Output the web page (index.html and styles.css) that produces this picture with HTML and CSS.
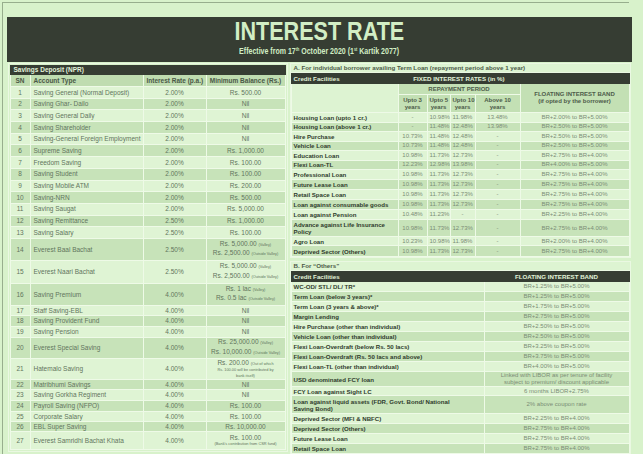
FILE: index.html
```html
<!DOCTYPE html>
<html>
<head>
<meta charset="utf-8">
<link rel="stylesheet" href="styles.css">
</head>
<body>
<div class="frame">
  <div class="sheet">
    <header class="banner">
      <div class="title"><span>INTEREST RATE</span></div>
      <div class="subtitle"><span>Effective from 17<sup>th</sup> October 2020 (1<sup>st</sup> Kartik 2077)</span></div>
    </header>
    <div class="content">
      <section class="left">
        <table class="tbl sav">
          <colgroup><col class="c-sn"><col class="c-acc"><col class="c-int"><col class="c-min"></colgroup>
          <tr class="dark-head"><td colspan="4">Savings Deposit (NPR)</td></tr>
          <tr class="col-head"><td class="ctr">SN</td><td>Account Type</td><td class="ctr">Interest Rate (p.a.)</td><td class="ctr">Minimum Balance (Rs.)</td></tr>
          <tr class="lt h12"><td class="ctr">1</td><td>Saving General (Normal Deposit)</td><td class="ctr">2.00%</td><td class="ctr">Rs. 500.00</td></tr>
          <tr class="dk h12"><td class="ctr">2</td><td>Saving Ghar- Dailo</td><td class="ctr">2.00%</td><td class="ctr">Nil</td></tr>
          <tr class="lt h12"><td class="ctr">3</td><td>Saving General Daily</td><td class="ctr">2.00%</td><td class="ctr">Nil</td></tr>
          <tr class="dk h12"><td class="ctr">4</td><td>Saving Shareholder</td><td class="ctr">2.00%</td><td class="ctr">Nil</td></tr>
          <tr class="lt h12"><td class="ctr">5</td><td>Saving-General Foreign Employment</td><td class="ctr">2.00%</td><td class="ctr">Nil</td></tr>
          <tr class="dk h12"><td class="ctr">6</td><td>Supreme Saving</td><td class="ctr">2.00%</td><td class="ctr">Rs. 1,000.00</td></tr>
          <tr class="lt h12"><td class="ctr">7</td><td>Freedom Saving</td><td class="ctr">2.00%</td><td class="ctr">Rs. 100.00</td></tr>
          <tr class="dk h12"><td class="ctr">8</td><td>Saving Student</td><td class="ctr">2.00%</td><td class="ctr">Rs. 100.00</td></tr>
          <tr class="lt h12"><td class="ctr">9</td><td>Saving Mobile ATM</td><td class="ctr">2.00%</td><td class="ctr">Rs. 200.00</td></tr>
          <tr class="dk h12"><td class="ctr">10</td><td>Saving-NRN</td><td class="ctr">2.00%</td><td class="ctr">Rs. 500.00</td></tr>
          <tr class="lt h12"><td class="ctr">11</td><td>Saving Saugat</td><td class="ctr">2.00%</td><td class="ctr">Rs. 5,000.00</td></tr>
          <tr class="dk h12"><td class="ctr">12</td><td>Saving Remittance</td><td class="ctr">2.50%</td><td class="ctr">Rs. 1,000.00</td></tr>
          <tr class="lt h12"><td class="ctr">13</td><td>Saving Salary</td><td class="ctr">2.50%</td><td class="ctr">Rs. 100.00</td></tr>
          <tr class="dk h22"><td class="ctr">14</td><td>Everest Baal Bachat</td><td class="ctr">2.50%</td><td class="ctr">Rs. 5,000.00 <small>(Valley)</small><br>Rs. 2,500.00 <small>(Outside Valley)</small></td></tr>
          <tr class="lt h23"><td class="ctr">15</td><td>Everest Naari Bachat</td><td class="ctr">2.50%</td><td class="ctr">Rs. 5,000.00 <small>(Valley)</small><br>Rs. 2,500.00 <small>(Outside Valley)</small></td></tr>
          <tr class="dk h22"><td class="ctr">16</td><td>Saving Premium</td><td class="ctr">4.00%</td><td class="ctr">Rs. 1 lac <small>(Valley)</small><br>Rs. 0.5 lac <small>(Outside Valley)</small></td></tr>
          <tr class="lt h10"><td class="ctr">17</td><td>Staff Saving-EBL</td><td class="ctr">4.00%</td><td class="ctr">Nil</td></tr>
          <tr class="dk h11"><td class="ctr">18</td><td>Saving Provident Fund</td><td class="ctr">4.00%</td><td class="ctr">Nil</td></tr>
          <tr class="lt h11"><td class="ctr">19</td><td>Saving Pension</td><td class="ctr">4.00%</td><td class="ctr">Nil</td></tr>
          <tr class="dk h21"><td class="ctr">20</td><td>Everest Special Saving</td><td class="ctr">4.00%</td><td class="ctr">Rs. 25,000.00 <small>(Valley)</small><br>Rs. 10,000.00 <small>(Outside Valley)</small></td></tr>
          <tr class="lt h21"><td class="ctr">21</td><td>Hatemalo Saving</td><td class="ctr">4.00%</td><td class="ctr tiny-lines">Rs. 200.00 <small>(Out of which</small><br><small>Rs. 100.00 will be contributed by</small><br><small>bank itself)</small></td></tr>
          <tr class="dk h10"><td class="ctr">22</td><td>Matribhumi Savings</td><td class="ctr">4.00%</td><td class="ctr">Nil</td></tr>
          <tr class="lt h11"><td class="ctr">23</td><td>Saving Gorkha Regiment</td><td class="ctr">4.00%</td><td class="ctr">Nil</td></tr>
          <tr class="dk h11"><td class="ctr">24</td><td>Payroll Saving (NFPO)</td><td class="ctr">4.00%</td><td class="ctr">Rs. 100.00</td></tr>
          <tr class="lt h10"><td class="ctr">25</td><td>Corporate Salary</td><td class="ctr">4.00%</td><td class="ctr">Rs. 100.00</td></tr>
          <tr class="dk h10"><td class="ctr">26</td><td>EBL Super Saving</td><td class="ctr">4.00%</td><td class="ctr">Rs. 10,000.00</td></tr>
          <tr class="lt h18"><td class="ctr">27</td><td>Everest Samridhi Bachat Khata</td><td class="ctr">4.00%</td><td class="ctr tiny-lines">Rs. 100.00<br><small>(Bank's contribution from CSR fund)</small></td></tr>
        </table>
      </section>
      <div class="right">
        <section class="box">
          <div class="box-title">A. For individual borrower availing Term Loan (repayment period above 1 year)</div>
          <table class="tbl loan">
            <colgroup><col class="c-cf"><col class="c-u3"><col class="c-u5"><col class="c-u10"><col class="c-a10"><col class="c-fl"></colgroup>
            <tr class="dark-head h10"><td>Credit Facilities</td><td colspan="4" class="ctr">FIXED INTEREST RATES (in %)</td><td></td></tr>
            <tr class="h11"><td rowspan="2" class="blank"></td><td colspan="4" class="ctr sub-head">REPAYMENT PERIOD</td><td rowspan="2" class="ctr sub-head">FLOATING INTEREST BAND<br><span class="note">(if opted by the borrower)</span></td></tr>
            <tr class="h18"><td class="ctr sub-head">Upto 3<br>years</td><td class="ctr sub-head">Upto 5<br>years</td><td class="ctr sub-head">Upto 10<br>years</td><td class="ctr sub-head">Above 10<br>years</td></tr>
            <tr class="lt h95"><td class="cf">Housing Loan (upto 1 cr.)</td><td class="ctr">-</td><td class="ctr">10.98%</td><td class="ctr">11.98%</td><td class="ctr">13.48%</td><td class="ctr">BR+2.00% to BR+5.00%</td></tr>
            <tr class="dk h95"><td class="cf">Housing Loan (above 1 cr.)</td><td class="ctr">-</td><td class="ctr">11.48%</td><td class="ctr">12.48%</td><td class="ctr">13.98%</td><td class="ctr">BR+2.50% to BR+5.00%</td></tr>
            <tr class="lt h95"><td class="cf">Hire Purchase</td><td class="ctr">10.73%</td><td class="ctr">11.48%</td><td class="ctr">12.48%</td><td class="ctr">-</td><td class="ctr">BR+2.50% to BR+5.00%</td></tr>
            <tr class="dk h95"><td class="cf">Vehicle Loan</td><td class="ctr">10.73%</td><td class="ctr">11.48%</td><td class="ctr">12.48%</td><td class="ctr">-</td><td class="ctr">BR+2.50% to BR+5.00%</td></tr>
            <tr class="lt h95"><td class="cf">Education Loan</td><td class="ctr">10.98%</td><td class="ctr">11.73%</td><td class="ctr">12.73%</td><td class="ctr">-</td><td class="ctr">BR+2.75% to BR+4.00%</td></tr>
            <tr class="dk h95"><td class="cf">Flexi Loan-TL</td><td class="ctr">12.23%</td><td class="ctr">12.98%</td><td class="ctr">13.98%</td><td class="ctr">-</td><td class="ctr">BR+4.00% to BR+5.00%</td></tr>
            <tr class="lt h10"><td class="cf">Professional Loan</td><td class="ctr">10.98%</td><td class="ctr">11.73%</td><td class="ctr">12.73%</td><td class="ctr">-</td><td class="ctr">BR+2.75% to BR+4.00%</td></tr>
            <tr class="dk h10"><td class="cf">Future Lease Loan</td><td class="ctr">10.98%</td><td class="ctr">11.73%</td><td class="ctr">12.73%</td><td class="ctr">-</td><td class="ctr">BR+2.75% to BR+4.00%</td></tr>
            <tr class="lt h10"><td class="cf">Retail Space Loan</td><td class="ctr">10.98%</td><td class="ctr">11.73%</td><td class="ctr">12.73%</td><td class="ctr">-</td><td class="ctr">BR+2.75% to BR+4.00%</td></tr>
            <tr class="dk h10"><td class="cf">Loan against consumable goods</td><td class="ctr">10.98%</td><td class="ctr">11.73%</td><td class="ctr">12.73%</td><td class="ctr">-</td><td class="ctr">BR+2.75% to BR+4.00%</td></tr>
            <tr class="lt h10"><td class="cf">Loan against Pension</td><td class="ctr">10.48%</td><td class="ctr">11.23%</td><td class="ctr">-</td><td class="ctr">-</td><td class="ctr">BR+2.25% to BR+4.00%</td></tr>
            <tr class="dk h17"><td class="cf">Advance against Life Insurance<br>Policy</td><td class="ctr">10.98%</td><td class="ctr">11.73%</td><td class="ctr">12.73%</td><td class="ctr">-</td><td class="ctr">BR+2.75% to BR+4.00%</td></tr>
            <tr class="lt h9"><td class="cf">Agro Loan</td><td class="ctr">10.23%</td><td class="ctr">10.98%</td><td class="ctr">11.98%</td><td class="ctr">-</td><td class="ctr">BR+2.00% to BR+4.00%</td></tr>
            <tr class="dk h11"><td class="cf">Deprived Sector (Others)</td><td class="ctr">10.98%</td><td class="ctr">11.73%</td><td class="ctr">12.73%</td><td class="ctr">-</td><td class="ctr">BR+2.75% to BR+4.00%</td></tr>
          </table>
        </section>
        <section class="box">
          <div class="box-title">B. For “Others”</div>
          <table class="tbl loan">
            <colgroup><col class="c-bcf"><col class="c-bfl"></colgroup>
            <tr class="dark-head h10"><td>Credit Facilities</td><td class="ctr">FLOATING INTEREST BAND</td></tr>
            <tr class="lt h10"><td class="cf">WC-OD/ STL/ DL/ TR*</td><td class="ctr">BR+1.25% to BR+5.00%</td></tr>
            <tr class="dk h10"><td class="cf">Term Loan (below 3 years)*</td><td class="ctr">BR+1.25% to BR+5.00%</td></tr>
            <tr class="lt h10"><td class="cf">Term Loan (3 years &amp; above)*</td><td class="ctr">BR+1.75% to BR+5.00%</td></tr>
            <tr class="dk h10"><td class="cf">Margin Lending</td><td class="ctr">BR+2.75% to BR+5.00%</td></tr>
            <tr class="lt h10"><td class="cf">Hire Purchase (other than individual)</td><td class="ctr">BR+2.50% to BR+5.00%</td></tr>
            <tr class="dk h10"><td class="cf">Vehicle Loan (other than individual)</td><td class="ctr">BR+2.50% to BR+5.00%</td></tr>
            <tr class="lt h10"><td class="cf">Flexi Loan-Overdraft (below Rs. 50 lacs)</td><td class="ctr">BR+3.25% to BR+5.00%</td></tr>
            <tr class="dk h10"><td class="cf">Flexi Loan-Overdraft (Rs. 50 lacs and above)</td><td class="ctr">BR+3.75% to BR+5.00%</td></tr>
            <tr class="lt h10"><td class="cf">Flexi Loan-TL (other than individual)</td><td class="ctr">BR+4.00% to BR+5.00%</td></tr>
            <tr class="dk h15"><td class="cf">USD denominated FCY loan</td><td class="ctr">Linked with LIBOR as per tenure of facility<br>subject to premium/ discount applicable</td></tr>
            <tr class="lt h9"><td class="cf">FCY Loan against Sight LC</td><td class="ctr">6 months LIBOR+2.75%</td></tr>
            <tr class="dk h18"><td class="cf">Loan against liquid assets (FDR, Govt. Bond/ National<br>Saving Bond)</td><td class="ctr">2% above coupon rate</td></tr>
            <tr class="lt h10"><td class="cf">Deprived Sector (MFI &amp; NBFC)</td><td class="ctr">BR+2.25% to BR+4.00%</td></tr>
            <tr class="dk h10"><td class="cf">Deprived Sector (Others)</td><td class="ctr">BR+2.75% to BR+4.00%</td></tr>
            <tr class="lt h10"><td class="cf">Future Lease Loan</td><td class="ctr">BR+2.75% to BR+4.00%</td></tr>
            <tr class="dk h10"><td class="cf">Retail Space Loan</td><td class="ctr">BR+2.75% to BR+4.00%</td></tr>
            <tr class="lt h10"><td class="cf">Agro Loan</td><td class="ctr">BR+2.00% to BR+4.00%</td></tr>
          </table>
        </section>
      </div>
    </div>
  </div>
</div>
</body>
</html>
```

FILE: styles.css
```css
html, body {
  margin: 0;
  padding: 0;
  background: #d8f2cb;
  overflow: hidden;
}
body {
  font-family: "Liberation Sans", Arial, sans-serif;
  color: #62755d;
  width: 643px;
  height: 454px;
}
.frame {
  margin: 2px 0 0 2px;
  width: 626px;
  height: 460px;
  border-top: 1.5px solid #97ae8d;
  border-left: 1.5px solid #97ae8d;
}
.sheet {
  margin: 14px 0 0 3.5px;
  width: 625px;
}
.banner {
  background: #363d33;
  height: 45px;
  padding-top: 0;
  box-sizing: border-box;
  text-align: center;
  color: #d2eec5;
}
.title {
  font-size: 26px;
  line-height: 28px;
  font-weight: bold;
}
.title span,
.subtitle span {
  display: inline-block;
  transform: scaleX(0.83);
}
.subtitle {
  font-size: 9.5px;
  line-height: 11px;
  font-weight: bold;
}
.subtitle span {
  transform: scaleX(0.74);
}
.subtitle sup {
  font-size: 5px;
  line-height: 5px;
  vertical-align: top;
  position: relative;
  top: 1.5px;
}
.content {
  display: flex;
  align-items: flex-start;
  gap: 2px;
  padding: 1px 0 0 1px;
}
.left {
  border: 1px solid #eaf8e2;
  padding: 1px;
}
.right {
  display: flex;
  flex-direction: column;
  gap: 3px;
}
.box {
  border: 1px solid #eaf8e2;
  background: #ddf3d2;
}
.box-title {
  height: 8px;
  line-height: 8px;
  font-size: 6.2px;
  font-weight: bold;
  color: #4c5a48;
  padding-left: 3px;
  border-bottom: 1px solid #eaf8e2;
  background: #ddf4d2;
}
.tbl {
  border-collapse: collapse;
  table-layout: fixed;
}
.tbl td {
  border: 1px solid #eefae7;
  padding: 0 3px;
  white-space: nowrap;
  overflow: hidden;
  vertical-align: middle;
}
.sav {
  width: 275px;
  font-size: 6.5px;
  line-height: 7.6px;
}
.c-sn { width: 20px; }
.c-acc { width: 113px; }
.c-int { width: 63px; }
.c-min { width: 79px; }
.ctr { text-align: center; }
.dark-head td {
  background: #363d33;
  color: #e2f3da;
  font-weight: bold;
  border-color: #363d33;
}
.sav .dark-head { height: 9px; }
.col-head { height: 12px; }
.col-head td {
  background: #bfdcb0;
  color: #4a5846;
  font-weight: bold;
}
.lt td { background: #dff4d4; }
.dk td { background: #c7e3b9; }
.h9 { height: 9px; }
.h95 { height: 9.5px; }
.h10 { height: 10px; }
.h11 { height: 11px; }
.h12 { height: 11.7px; }
.h15 { height: 15px; }
.h17 { height: 17px; }
.h18 { height: 18px; }
.h21 { height: 21px; }
.h22 { height: 22px; }
.h23 { height: 23px; }
.sav small {
  font-size: 3.8px;
}
.tiny-lines {
  line-height: 5px;
}
.tiny-lines small {
  font-size: 3.9px;
}
.loan {
  width: 338px;
  font-size: 6px;
  line-height: 7px;
  color: #7b8d76;
}
.c-cf { width: 107px; }
.c-u3 { width: 29px; }
.c-u5 { width: 23px; }
.c-u10 { width: 25px; }
.c-a10 { width: 45px; }
.c-fl { width: 109px; }
.c-bcf { width: 193px; }
.c-bfl { width: 145px; }
.loan .dark-head td { font-size: 6.2px; }
.loan td.cf {
  font-weight: bold;
  color: #2f3b2c;
  font-size: 6.1px;
}
.loan td { padding: 0 2px; }
.sub-head {
  background: #c3e0b4;
  color: #4d5b49;
  font-weight: bold;
}
.blank { background: #ddf3d2; }
```
